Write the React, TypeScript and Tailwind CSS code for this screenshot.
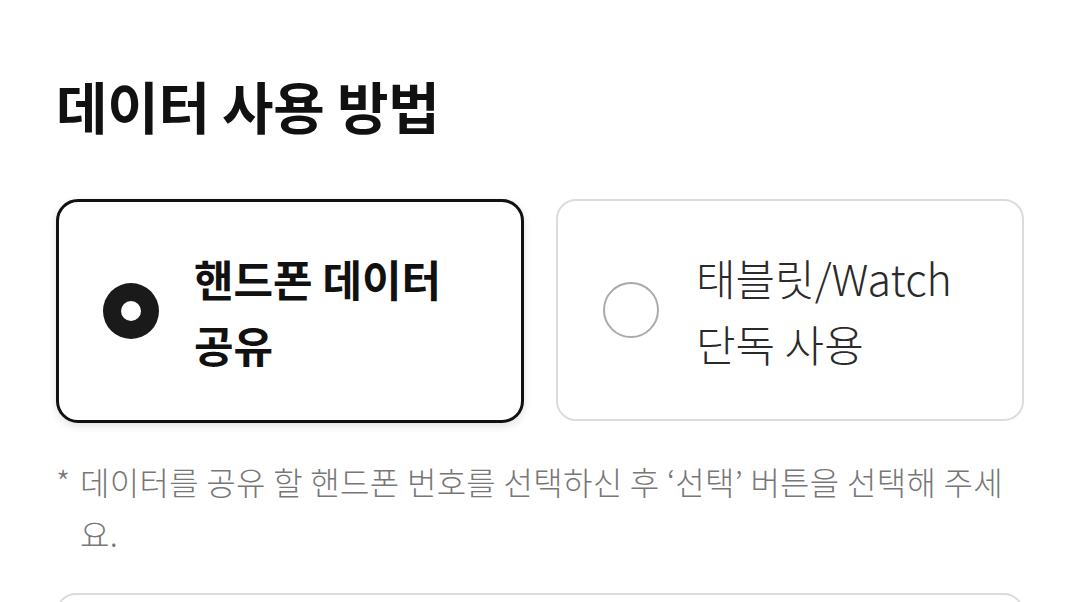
import React from "react";

const font = { fontFamily: '"Noto Sans CJK KR", "Noto Sans", sans-serif' };

export default function App() {
  return (
    <div className="h-[602px] w-[1080px] overflow-hidden bg-white" style={font}>
      <div className="px-[56px] pt-[75px]">
        <h1 className="text-[56px] font-bold leading-[60px] tracking-[-0.3px] text-[#111]">데이터 사용 방법</h1>

        <div className="mt-[64px] grid grid-cols-2 gap-[32px]">
          <div className="flex h-[224px] items-center rounded-[22px] border-[3px] border-[#111] bg-white pl-[44px] shadow-[0_3px_8px_rgba(0,0,0,0.12)]">
            <div className="flex h-[56px] w-[56px] shrink-0 items-center justify-center rounded-full bg-[#1a1a1a]">
              <div className="h-[20px] w-[20px] rounded-full bg-white" />
            </div>
            <div className="ml-[35px] text-[43px] font-bold leading-[66px] text-[#111]">
              핸드폰 데이터
              <br />
              공유
            </div>
          </div>

          <div className="flex h-[222px] items-center rounded-[20px] border-2 border-[#dcdcdc] bg-white pl-[45px]">
            <div className="h-[56px] w-[56px] shrink-0 rounded-full border-2 border-[#aaaaaa]" />
            <div className="ml-[37px] text-[43px] font-light leading-[66px] text-[#2a2a2a]">
              태블릿/Watch
              <br />
              단독 사용
            </div>
          </div>
        </div>

        <div className="mt-[32px] flex text-[32px] font-light leading-[52px] tracking-[0.3px] text-[#777]">
          <span className="w-[24px] shrink-0">*</span>
          <span>데이터를 공유 할 핸드폰 번호를 선택하신 후 ‘선택’ 버튼을 선택해 주세요.</span>
        </div>

        <div className="mt-[34px] h-[80px] rounded-[20px] border-2 border-[#dcdcdc] bg-white" />
      </div>
    </div>
  );
}
